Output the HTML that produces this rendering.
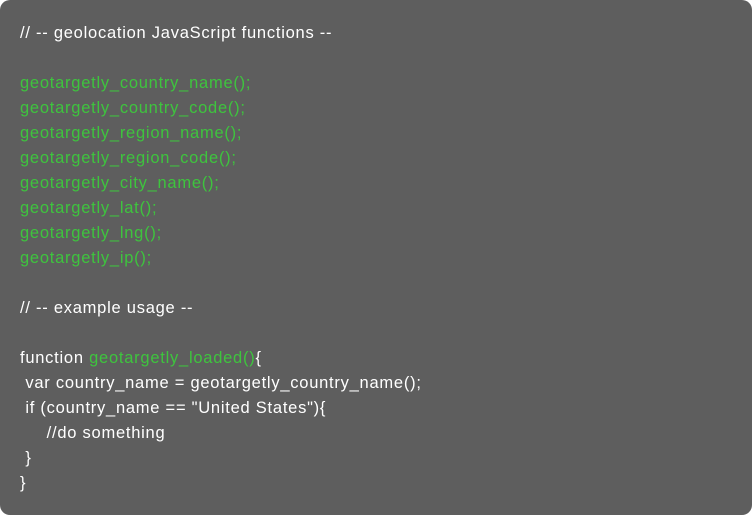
<!DOCTYPE html>
<html><head><style>
html,body{margin:0;padding:0;background:#fff;}
.box{width:752px;height:515px;background:#5e5e5e;border-radius:10px;box-sizing:border-box;padding:21px 20px;
font-family:"Liberation Sans","DejaVu Sans",sans-serif;font-size:16.5px;line-height:25px;color:#fff;white-space:pre;letter-spacing:0.75px}
.g{color:#3ec43e}
</style></head><body><div class="box">// -- geolocation JavaScript functions --

<span class="g">geotargetly_country_name();
geotargetly_country_code();
geotargetly_region_name();
geotargetly_region_code();
geotargetly_city_name();
geotargetly_lat();
geotargetly_lng();
geotargetly_ip();</span>

// -- example usage --

function <span class="g">geotargetly_loaded()</span>{
 var country_name = geotargetly_country_name();
 if (country_name == "United States"){
     //do something
 }
}</div></body></html>
